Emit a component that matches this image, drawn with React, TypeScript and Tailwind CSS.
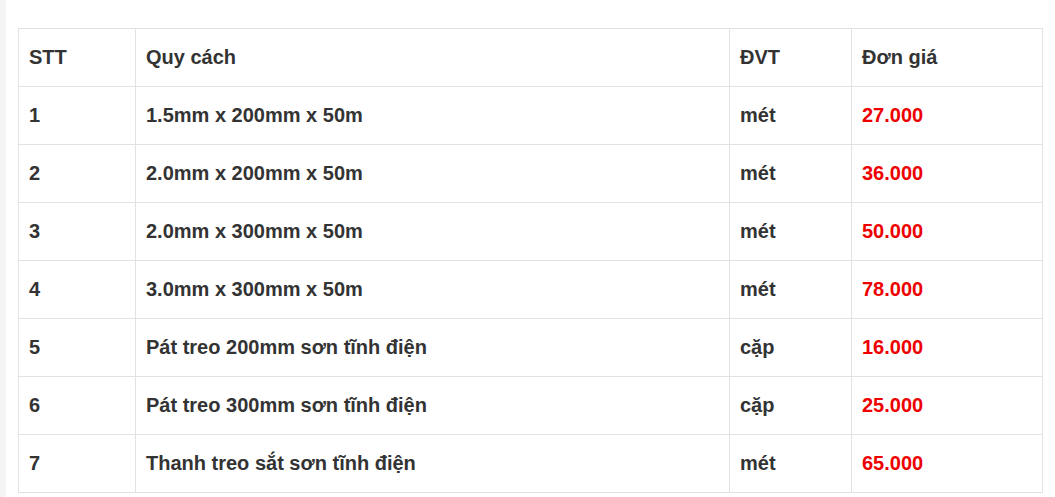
const rows = [
  { stt: '1', name: '1.5mm x 200mm x 50m', unit: 'mét', price: '27.000' },
  { stt: '2', name: '2.0mm x 200mm x 50m', unit: 'mét', price: '36.000' },
  { stt: '3', name: '2.0mm x 300mm x 50m', unit: 'mét', price: '50.000' },
  { stt: '4', name: '3.0mm x 300mm x 50m', unit: 'mét', price: '78.000' },
  { stt: '5', name: 'Pát treo 200mm sơn tĩnh điện', unit: 'cặp', price: '16.000' },
  { stt: '6', name: 'Pát treo 300mm sơn tĩnh điện', unit: 'cặp', price: '25.000' },
  { stt: '7', name: 'Thanh treo sắt sơn tĩnh điện', unit: 'mét', price: '65.000' },
];

const cell = 'border border-[#e2e2e2] pl-[10px] pr-[11px] pb-[2px] h-[58px] align-middle text-left';

export default function App() {
  return (
    <div className="w-[1055px] h-[497px] bg-[#f4f4f4] overflow-hidden font-['Liberation_Sans',Arial,sans-serif]">
      <div className="ml-[6px] h-full bg-white pl-[12px] pt-[28px]">
        <table className="table-fixed border-collapse w-[1024px] text-[20px] font-bold text-[#333]">
          <colgroup>
            <col className="w-[117px]" />
            <col className="w-[594px]" />
            <col className="w-[122px]" />
            <col className="w-[191px]" />
          </colgroup>
          <thead>
            <tr>
              <th className={cell}>STT</th>
              <th className={cell}>Quy cách</th>
              <th className={cell}>ĐVT</th>
              <th className={cell}>Đơn giá</th>
            </tr>
          </thead>
          <tbody>
            {rows.map((r) => (
              <tr key={r.stt}>
                <td className={cell}>{r.stt}</td>
                <td className={cell}>{r.name}</td>
                <td className={cell}>{r.unit}</td>
                <td className={cell + ' text-[#ee0000]'}>{r.price}</td>
              </tr>
            ))}
          </tbody>
        </table>
      </div>
    </div>
  );
}
